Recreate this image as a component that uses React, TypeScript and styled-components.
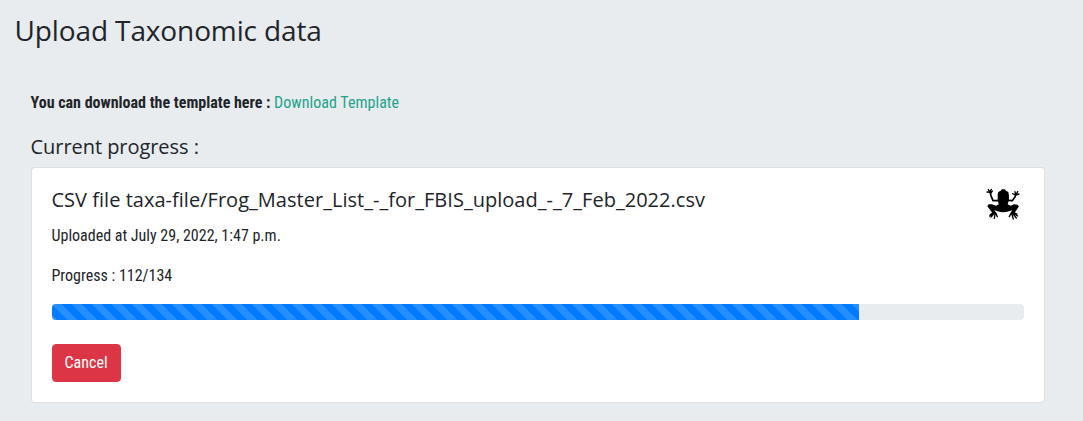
import React from "react";
import styled, { createGlobalStyle } from "styled-components";

const GlobalStyle = createGlobalStyle`
  *, *::before, *::after { box-sizing: border-box; }
  body {
    margin: 0;
    background: #e8ecef;
    color: #212529;
    font-family: "Roboto Condensed", Roboto, sans-serif;
    font-stretch: 75%;
    font-size: 16px;
    line-height: 24px;
  }
`;

const Page = styled.main`
  min-height: 421px;
  padding: 13px 14.5px 0;
`;

const PageTitle = styled.h3`
  margin: 0;
  font: 400 28px/34px "Open Sans", sans-serif;
  letter-spacing: -0.12px;
`;

const Section = styled.section`
  width: 1046.4px;
  padding: 44px 16px 0;
`;

const SubHeading = styled.h5<{ $gap: number; $tracking: number }>`
  margin: 0 0 ${(p) => p.$gap}px;
  font: 400 20px/24px "Open Sans", sans-serif;
  letter-spacing: ${(p) => p.$tracking}px;
`;

const TemplateLine = styled.div`
  margin-bottom: 20px;
  font-weight: 700;
`;

const TemplateLink = styled.a`
  color: #1fa38a;
  font-weight: 400;
  letter-spacing: 0.03px;
  text-decoration: none;
`;

const Card = styled.article`
  padding: 20px;
  background: #fff;
  border: 1px solid rgba(0, 0, 0, 0.125);
  border-radius: 4px;
`;

const CardTop = styled.div`
  display: flex;
  justify-content: space-between;
  align-items: flex-start;
`;

const FrogIcon = styled.svg`
  width: 38px;
  height: 38px;
  margin: -4px 2px 0 0;
`;

const Text = styled.p`
  margin: 0 0 16px;
`;

const Track = styled.div`
  height: 16px;
  margin-bottom: 24px;
  overflow: hidden;
  background: #e9ecef;
  border-radius: 4px;
`;

const Bar = styled.div`
  height: 100%;
  background-color: #007bff;
  background-image: linear-gradient(
    45deg,
    rgba(255, 255, 255, 0.15) 25%,
    transparent 25%,
    transparent 50%,
    rgba(255, 255, 255, 0.15) 50%,
    rgba(255, 255, 255, 0.15) 75%,
    transparent 75%,
    transparent
  );
  background-size: 20px 20px;
`;

const CancelButton = styled.button`
  display: block;
  height: 38px;
  padding: 6px 12px;
  color: #fff;
  background: #dc3545;
  border: 1px solid #dc3545;
  border-radius: 4px;
  font: inherit;
`;

const done = 112;
const total = 134;

export default function App() {
  return (
    <Page>
      <GlobalStyle />
      <PageTitle>Upload Taxonomic data</PageTitle>
      <Section>
        <TemplateLine>
          You can download the template here : <TemplateLink>Download Template</TemplateLink>
        </TemplateLine>
        <SubHeading $gap={8} $tracking={-0.05}>Current progress :</SubHeading>
        <Card>
          <CardTop>
            <div>
              <SubHeading $gap={12} $tracking={0.025}>
                CSV file taxa-file/Frog_Master_List_-_for_FBIS_upload_-_7_Feb_2022.csv
              </SubHeading>
              <Text>Uploaded at July 29, 2022, 1:47 p.m.</Text>
            </div>
            <FrogIcon viewBox="0 0 114 114" aria-label="Frog">
              <path d="M50 20 54 16H62L66 20 73 24 75 36 75 47 71 61 80 65 90 61 100 62 105 67 98 77 90 89 81 88 84 79 75 82 66 84 58 85 50 84 41 82 32 79 35 88 27 90 19 79 10 67 14 61 24 61 36 65 44 61 41 47 41 31 43 24Z" />
              <g fill="none" stroke="#000" strokeLinecap="round" strokeLinejoin="round">
                <path strokeWidth="5" d="M43 50 27 50 22 38 18 25M71 49 85 50 93 39 95 30" />
                <path strokeWidth="4" d="M18 25 9 24M18 25 13 17M18 24 22 16M20 28 25 21M95 33 86 29M95 32 93 23M96 32 101 23M96 33 105 30" />
                <path strokeWidth="4" d="M31 84 19 92M33 85 21 99M34 86 31 103M35 86 40 98M30 86 17 96M85 84 99 90M84 85 101 96M83 85 97 102M82 86 88 105M82 86 76 98" />
              </g>
            </FrogIcon>
          </CardTop>
          <Text>
            Progress : {done}/{total}
          </Text>
          <Track>
            <Bar style={{ width: `${Math.floor((done / total) * 100)}%` }} />
          </Track>
          <CancelButton type="button">Cancel</CancelButton>
        </Card>
      </Section>
    </Page>
  );
}
